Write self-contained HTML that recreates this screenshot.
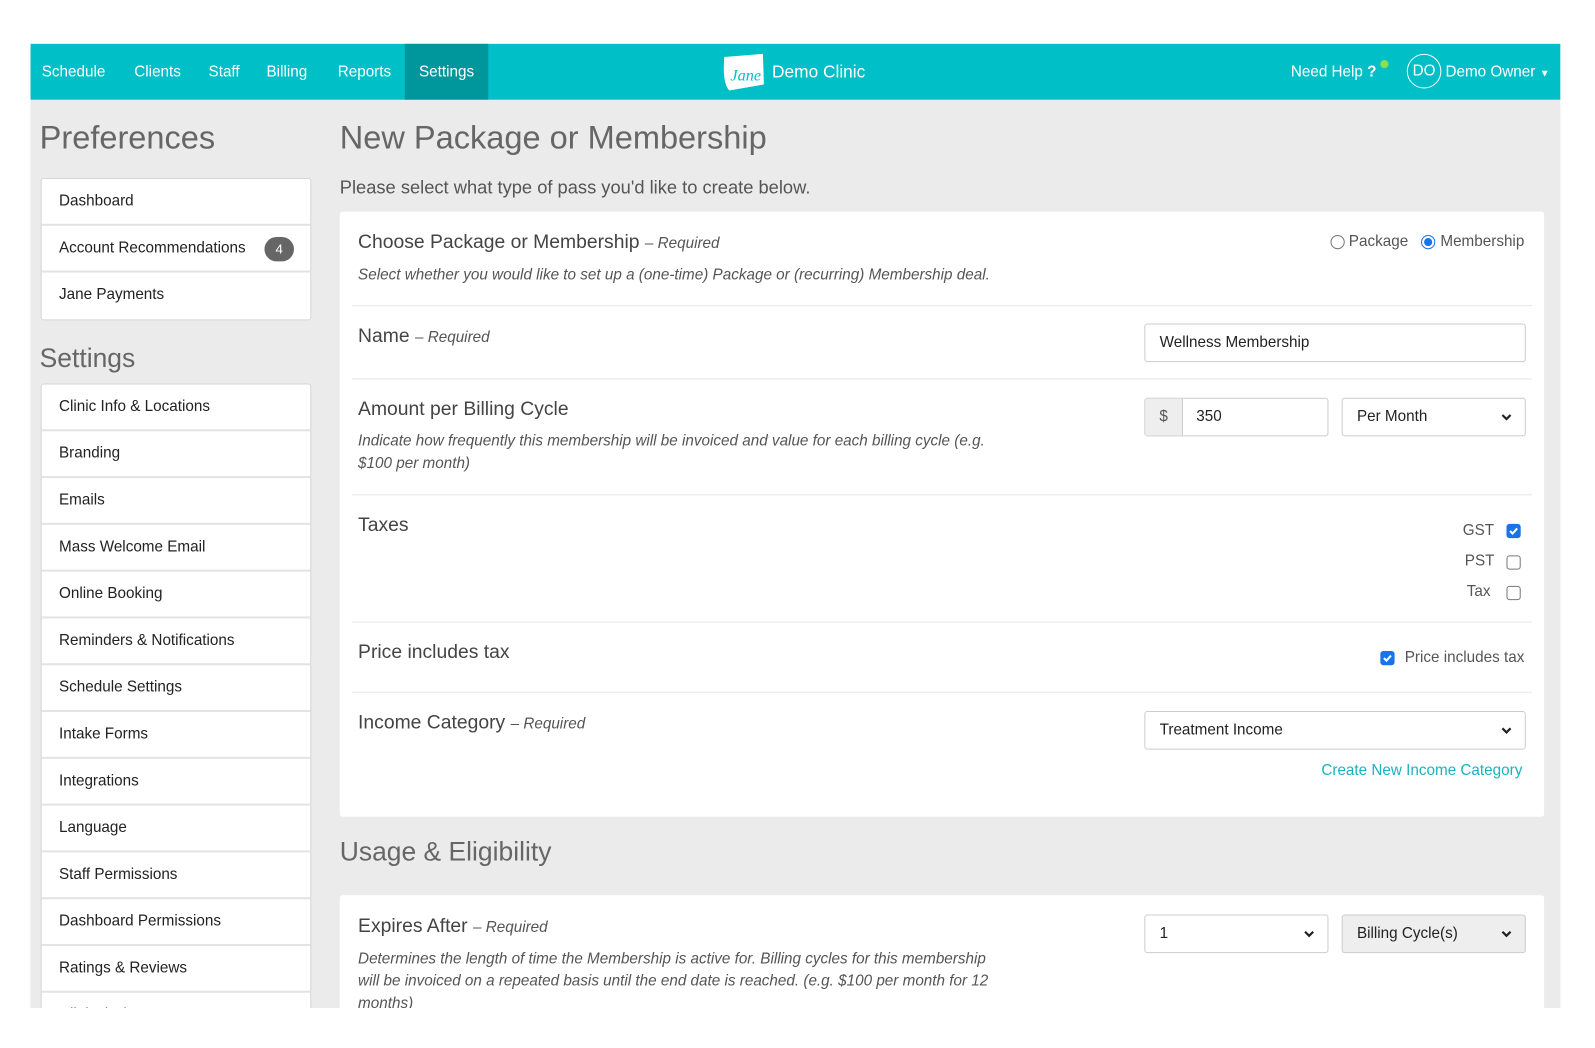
<!DOCTYPE html>
<html><head><meta charset="utf-8"><style>
*{box-sizing:border-box;margin:0;padding:0}
body{width:1595px;height:1046px;background:#fff;font-family:"Liberation Sans",sans-serif;position:relative;overflow:hidden;color:#333}
.wrap{position:absolute;left:0;top:0;width:1568px;height:1030px;transform:scale(1.0172);transform-origin:0 0}
.app{position:absolute;left:30px;top:43px;width:1504px;height:948px;background:#ebebeb;overflow:hidden}
.nav{position:absolute;left:0;top:0;width:1504px;height:55px;background:#00bfc6}
.nav a{position:absolute;top:0;height:55px;line-height:55px;color:#fff;font-size:15px}
.abs{position:absolute}
.panel{position:absolute;left:10px;width:266px;background:#fff;border:1px solid #d6d6d6;border-radius:3px}
.panel div{height:46px;line-height:44px;padding-left:17px;font-size:15px;color:#222;border-bottom:2px solid #e3e3e3;position:relative}
.card{position:absolute;left:304px;width:1184px;background:#fff;border-radius:3px}
.sep{position:absolute;left:12px;right:12px;height:1px;background:#e6e6e6}
.lbl{position:absolute;left:18px;font-size:19px;color:#444}
.lbl i{font-size:15px;color:#555}
.desc{position:absolute;left:18px;font-size:15px;font-style:italic;color:#555;line-height:22px}
.inp{position:absolute;height:38px;border:1px solid #ccc;border-radius:3px;background:#fff;font-size:15px;line-height:36px;padding-left:14px;color:#222}
.chev{position:absolute;right:12px;top:13px}
.cb{position:absolute;width:14px;height:14px;border:1px solid #777;border-radius:3px;background:#fff}
.cb.on{background:#1a73e8;border-color:#1a73e8}
.r{position:absolute;font-size:15px;color:#555}
</style></head><body>
<div class="wrap">
<div class="app">
<div class="nav">
<a style="left:11px">Schedule</a><a style="left:102px">Clients</a><a style="left:175px">Staff</a><a style="left:232px">Billing</a><a style="left:302px">Reports</a>
<a style="left:368px;width:82px;background:#00979c;text-align:center">Settings</a>
<svg class="abs" style="left:678px;top:9px" width="45" height="38" viewBox="0 0 45 38"><path d="M4 4 L42 1 L43 31 L9 37 Q2 30 4 4Z" fill="#fff"/><text x="10" y="27" font-size="16" font-style="italic" fill="#00bfc6" font-family="Liberation Serif">Jane</text></svg>
<a style="left:729px;font-size:17px">Demo Clinic</a>
<a style="left:1239px">Need Help <b>?</b></a>
<div class="abs" style="left:1327px;top:16px;width:8px;height:8px;border-radius:50%;background:#8be04e"></div>
<div class="abs" style="left:1353px;top:10px;width:34px;height:34px;border:1.5px solid #fff;border-radius:50%;color:#fff;font-size:15px;text-align:center;line-height:31px">DO</div>
<a style="left:1391px">Demo Owner <span style="font-size:10px">▼</span></a>
</div>
<div class="abs" style="left:9px;top:74px;font-size:32px;color:#666">Preferences</div>
<div class="panel" style="top:132px"><div>Dashboard</div><div>Account Recommendations<span class="abs" style="left:219px;top:11px;width:29px;height:24px;border-radius:12px;background:#666;color:#fff;font-size:13px;line-height:24px;text-align:center">4</span></div><div style="border:0">Jane Payments</div></div>
<div class="abs" style="left:9px;top:294px;font-size:26px;color:#666">Settings</div>
<div class="panel" style="top:334px"><div>Clinic Info &amp; Locations</div><div>Branding</div><div>Emails</div><div>Mass Welcome Email</div><div>Online Booking</div><div>Reminders &amp; Notifications</div><div>Schedule Settings</div><div>Intake Forms</div><div>Integrations</div><div>Language</div><div>Staff Permissions</div><div>Dashboard Permissions</div><div>Ratings &amp; Reviews</div><div>Clinical Charts</div></div>
<div class="abs" style="left:304px;top:74px;font-size:32px;color:#666">New Package or Membership</div>
<div class="abs" style="left:304px;top:131px;font-size:18px;color:#555">Please select what type of pass you'd like to create below.</div>
<div class="card" style="top:165px;height:595px">
<div class="lbl" style="top:20px">Choose Package or Membership <i>– Required</i></div>
<div class="desc" style="top:52px">Select whether you would like to set up a (one-time) Package or (recurring) Membership deal.</div>
<div class="abs" style="left:974px;top:23px;width:14px;height:14px;border:1px solid #777;border-radius:50%"></div>
<div class="r" style="left:992px;top:21px">Package</div>
<div class="abs" style="left:1063px;top:23px;width:14px;height:14px;border:1px solid #1a73e8;border-radius:50%"><div style="margin:2px;width:8px;height:8px;border-radius:50%;background:#1a73e8"></div></div>
<div class="r" style="left:1082px;top:21px">Membership</div>
<div class="sep" style="top:92px"></div>
<div class="lbl" style="top:112px">Name <i>– Required</i></div>
<div class="inp" style="left:791px;top:110px;width:375px">Wellness Membership</div>
<div class="sep" style="top:164px"></div>
<div class="lbl" style="top:184px">Amount per Billing Cycle</div>
<div class="desc" style="top:215px;width:630px">Indicate how frequently this membership will be invoiced and value for each billing cycle (e.g. $100 per month)</div>
<div class="inp" style="left:791px;top:183px;width:181px;padding-left:0"><span style="display:inline-block;width:37px;text-align:center;background:#eee;border-right:1px solid #ccc;height:36px;color:#555">$</span><span style="padding-left:13px">350</span></div>
<div class="inp" style="left:985px;top:183px;width:181px">Per Month<svg class="chev" width="12" height="10" viewBox="0 0 12 10"><path d="M2 3 L6 7 L10 3" stroke="#222" stroke-width="2.2" fill="none"/></svg></div>
<div class="sep" style="top:278px"></div>
<div class="lbl" style="top:298px">Taxes</div>
<div class="r" style="left:1104px;top:305px">GST</div><div class="cb on" style="left:1147px;top:307px"><svg width="12" height="12" viewBox="0 0 12 12" style="display:block"><path d="M2.5 6 L5 8.5 L9.5 3.5" stroke="#fff" stroke-width="2" fill="none"/></svg></div>
<div class="r" style="left:1106px;top:335px">PST</div><div class="cb" style="left:1147px;top:338px"></div>
<div class="r" style="left:1108px;top:365px">Tax</div><div class="cb" style="left:1147px;top:368px"></div>
<div class="sep" style="top:403px"></div>
<div class="lbl" style="top:423px">Price includes tax</div>
<div class="cb on" style="left:1023px;top:432px"><svg width="12" height="12" viewBox="0 0 12 12" style="display:block"><path d="M2.5 6 L5 8.5 L9.5 3.5" stroke="#fff" stroke-width="2" fill="none"/></svg></div><div class="r" style="left:1047px;top:430px">Price includes tax</div>
<div class="sep" style="top:472px"></div>
<div class="lbl" style="top:492px">Income Category <i>– Required</i></div>
<div class="inp" style="left:791px;top:491px;width:375px">Treatment Income<svg class="chev" width="12" height="10" viewBox="0 0 12 10"><path d="M2 3 L6 7 L10 3" stroke="#222" stroke-width="2.2" fill="none"/></svg></div>
<div class="r" style="left:965px;top:541px;color:#1ab3bd">Create New Income Category</div>
</div>
<div class="abs" style="left:304px;top:779px;font-size:26px;color:#666">Usage &amp; Eligibility</div>
<div class="card" style="top:837px;height:200px">
<div class="lbl" style="top:20px">Expires After <i>– Required</i></div>
<div class="desc" style="top:52px;width:640px">Determines the length of time the Membership is active for. Billing cycles for this membership will be invoiced on a repeated basis until the end date is reached. (e.g. $100 per month for 12 months)</div>
<div class="inp" style="left:791px;top:19px;width:181px">1<svg class="chev" width="12" height="10" viewBox="0 0 12 10"><path d="M2 3 L6 7 L10 3" stroke="#222" stroke-width="2.2" fill="none"/></svg></div>
<div class="inp" style="left:985px;top:19px;width:181px;background:#eee">Billing Cycle(s)<svg class="chev" width="12" height="10" viewBox="0 0 12 10"><path d="M2 3 L6 7 L10 3" stroke="#222" stroke-width="2.2" fill="none"/></svg></div>
</div>
</div>
</div>
</body></html>
